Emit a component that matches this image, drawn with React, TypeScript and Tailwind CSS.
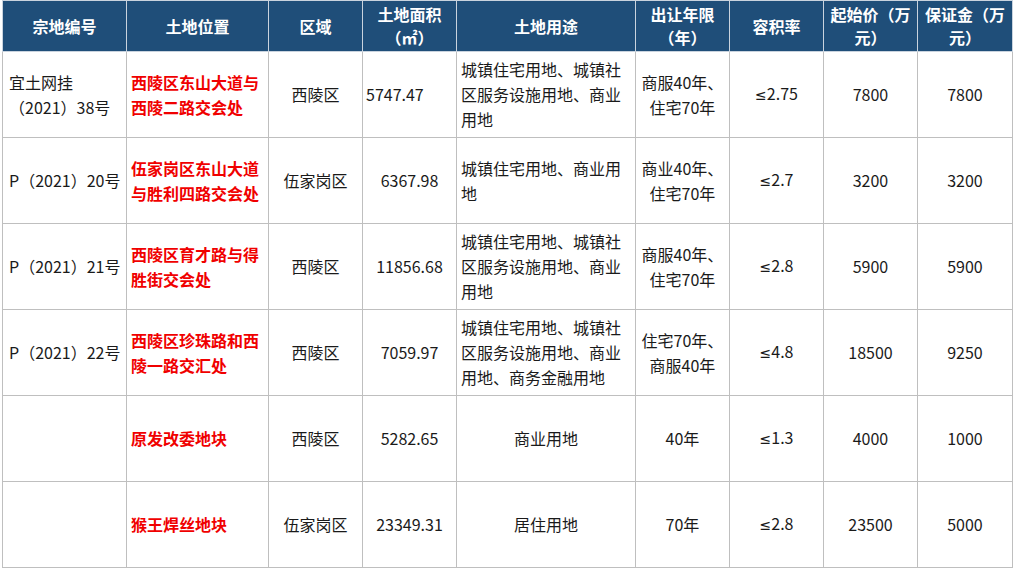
import React from "react"

type Row = {
  id: React.ReactNode
  loc: string
  area: string
  size: string
  sizeLeft?: boolean
  use: string
  useCenter?: boolean
  term: React.ReactNode
  ratio: string
  price: string
  deposit: string
}

const rows: Row[] = [
  {
    id: (
      <>
        宜土网挂
        <br />
        （2021）38号
      </>
    ),
    loc: "西陵区东山大道与西陵二路交会处",
    area: "西陵区",
    size: "5747.47",
    sizeLeft: true,
    use: "城镇住宅用地、城镇社区服务设施用地、商业用地",
    term: (
      <>
        商服40年、
        <br />
        住宅70年
      </>
    ),
    ratio: "2.75",
    price: "7800",
    deposit: "7800",
  },
  {
    id: "P（2021）20号",
    loc: "伍家岗区东山大道与胜利四路交会处",
    area: "伍家岗区",
    size: "6367.98",
    use: "城镇住宅用地、商业用地",
    term: (
      <>
        商业40年、
        <br />
        住宅70年
      </>
    ),
    ratio: "2.7",
    price: "3200",
    deposit: "3200",
  },
  {
    id: "P（2021）21号",
    loc: "西陵区育才路与得胜街交会处",
    area: "西陵区",
    size: "11856.68",
    use: "城镇住宅用地、城镇社区服务设施用地、商业用地",
    term: (
      <>
        商服40年、
        <br />
        住宅70年
      </>
    ),
    ratio: "2.8",
    price: "5900",
    deposit: "5900",
  },
  {
    id: "P（2021）22号",
    loc: "西陵区珍珠路和西陵一路交汇处",
    area: "西陵区",
    size: "7059.97",
    use: "城镇住宅用地、城镇社区服务设施用地、商业用地、商务金融用地",
    term: (
      <>
        住宅70年、
        <br />
        商服40年
      </>
    ),
    ratio: "4.8",
    price: "18500",
    deposit: "9250",
  },
  {
    id: "",
    loc: "原发改委地块",
    area: "西陵区",
    size: "5282.65",
    use: "商业用地",
    useCenter: true,
    term: "40年",
    ratio: "1.3",
    price: "4000",
    deposit: "1000",
  },
  {
    id: "",
    loc: "猴王焊丝地块",
    area: "伍家岗区",
    size: "23349.31",
    use: "居住用地",
    useCenter: true,
    term: "70年",
    ratio: "2.8",
    price: "23500",
    deposit: "5000",
  },
]

const th = "border border-[#c9d3de] bg-[#1f4e79] text-white font-bold text-center align-middle leading-[23px] px-1"
const td = "border border-[#bfbfbf] align-middle leading-[25px] text-[#1a1a1a]"

export default function App() {
  return (
    <div
      className="w-[1015px] h-[570px] bg-white overflow-hidden pl-[2px] text-[16px]"
      style={{ fontFamily: '"Noto Sans CJK SC", "Noto Sans", sans-serif' }}
    >
      <table className="table-fixed border-collapse w-[1010px]">
        <colgroup>
          <col className="w-[124px]" />
          <col className="w-[142px]" />
          <col className="w-[94px]" />
          <col className="w-[94px]" />
          <col className="w-[179px]" />
          <col className="w-[94px]" />
          <col className="w-[94px]" />
          <col className="w-[94px]" />
          <col className="w-[95px]" />
        </colgroup>
        <thead>
          <tr className="h-[51px]">
            <th className={th}>宗地编号</th>
            <th className={th}>土地位置</th>
            <th className={th}>区域</th>
            <th className={th}>
              土地面积
              <br />
              （㎡）
            </th>
            <th className={th}>土地用途</th>
            <th className={th}>
              出让年限
              <br />
              （年）
            </th>
            <th className={th}>容积率</th>
            <th className={th}>
              起始价（万
              <br />
              元）
            </th>
            <th className={th}>
              保证金（万
              <br />
              元）
            </th>
          </tr>
        </thead>
        <tbody>
          {rows.map((r, i) => (
            <tr key={i} className="h-[86px]">
              <td className={`${td} pl-[6px] pr-1`}>{r.id}</td>
              <td className={`${td} pl-[4px] pr-1 font-bold text-[#f00000]`}>{r.loc}</td>
              <td className={`${td} text-center`}>{r.area}</td>
              <td className={`${td} ${r.sizeLeft ? "text-left pl-[3px]" : "text-center"}`}>{r.size}</td>
              <td className={`${td} ${r.useCenter ? "text-center" : "text-left pl-[4px] pr-[10px]"}`}>{r.use}</td>
              <td className={`${td} text-center`}>{r.term}</td>
              <td className={`${td} text-center`}>
                <span style={{ fontFamily: '"DejaVu Sans", sans-serif' }} className="text-[14px]">
                  ≤
                </span>
                {r.ratio}
              </td>
              <td className={`${td} text-center`}>{r.price}</td>
              <td className={`${td} text-center`}>{r.deposit}</td>
            </tr>
          ))}
        </tbody>
      </table>
    </div>
  )
}
